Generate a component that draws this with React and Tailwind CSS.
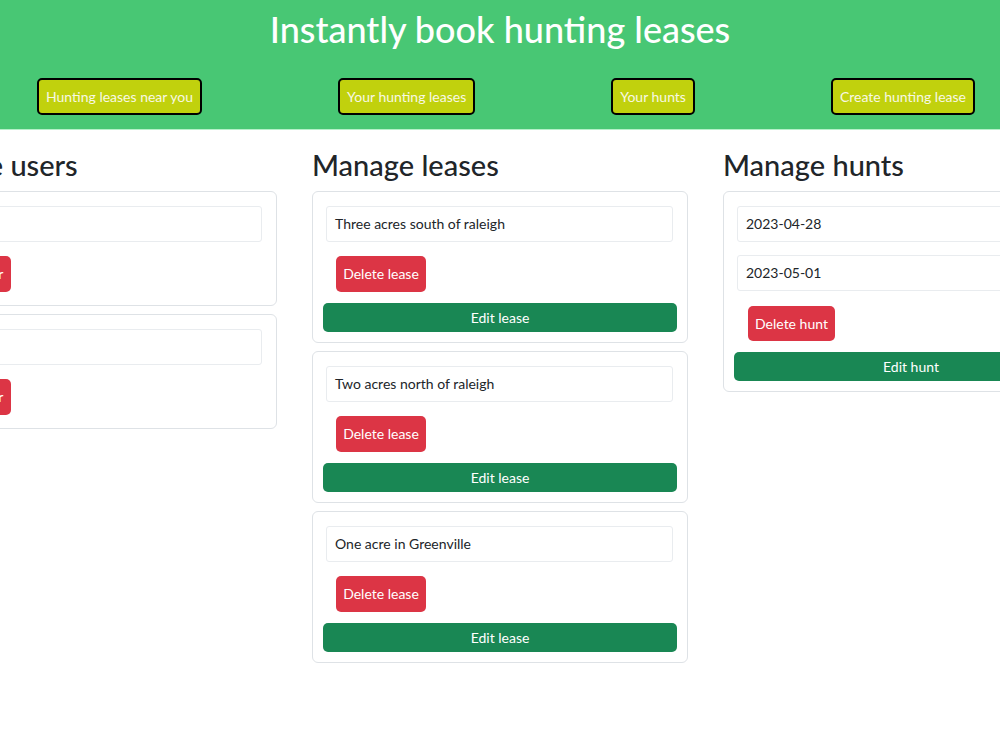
export default function App() {
  const navLinks = ['Hunting leases near you', 'Your hunting leases', 'Your hunts', 'Create hunting lease']

  const users = ['', '']
  const leases = ['Three acres south of raleigh', 'Two acres north of raleigh', 'One acre in Greenville']

  return (
    <div className="w-[1000px] min-h-[750px] bg-white overflow-hidden font-['Lato','Liberation_Sans',sans-serif] text-[#212529]">
      {/* Header */}
      <header className="bg-[#48c774] h-[130px] pt-[8px] border-b border-[#b5f0c9]">
        <h1 className="text-center text-white text-[36px] font-medium leading-[1.2]">Instantly book hunting leases</h1>
        <nav className="flex justify-between pl-[37px] pr-[25px] mt-[27px]">
          {navLinks.map((link) => (
            <button key={link} className="h-[37px] px-[7px] bg-[#c1d10d] border-2 border-black rounded-[5px] text-[14px] text-[#f8f8e4]">
              {link}
            </button>
          ))}
        </nav>
      </header>

      {/* Columns */}
      <main className="flex justify-center gap-[35px] pt-[18px]">
        {/* Left: users */}
        <section className="w-[376px] shrink-0">
          <h2 className="text-[29px] font-medium leading-[1.2] mb-[8px]">Manage users</h2>
          {users.map((u, idx) => (
            <div key={idx} className="border border-[#dee2e6] rounded-[6px] pt-[14px] pb-[13px] px-[10px] mb-[8px]">
              <div className="h-[36px] w-[347px] ml-[3px] border border-[#e9ecef] rounded-[3px] px-[8px] flex items-center text-[14px]">{u}</div>
              <button className="mt-[14px] ml-[13px] h-[36px] w-[86px] bg-[#dc3545] text-white rounded-[5px] text-[14px]">Delete user</button>
            </div>
          ))}
        </section>

        {/* Middle: leases */}
        <section className="w-[376px] shrink-0">
          <h2 className="text-[29px] font-medium leading-[1.2] mb-[8px]">Manage leases</h2>
          {leases.map((lease) => (
            <div key={lease} className="border border-[#dee2e6] rounded-[6px] pt-[14px] pb-[10px] px-[10px] mb-[8px]">
              <div className="h-[36px] w-[347px] ml-[3px] border border-[#e9ecef] rounded-[3px] px-[8px] flex items-center text-[14px]">{lease}</div>
              <button className="block mt-[14px] ml-[13px] h-[36px] w-[90px] bg-[#dc3545] text-white rounded-[5px] text-[14px]">Delete lease</button>
              <button className="block mt-[11px] h-[29px] w-full bg-[#198754] text-white rounded-[5px] text-[14px]">Edit lease</button>
            </div>
          ))}
        </section>

        {/* Right: hunts */}
        <section className="w-[376px] shrink-0">
          <h2 className="text-[29px] font-medium leading-[1.2] mb-[8px]">Manage hunts</h2>
          <div className="border border-[#dee2e6] rounded-[6px] pt-[14px] pb-[10px] px-[10px]">
            <div className="h-[36px] w-[347px] ml-[3px] border border-[#e9ecef] rounded-[3px] px-[8px] flex items-center text-[14px]">2023-04-28</div>
            <div className="mt-[13px] h-[36px] w-[347px] ml-[3px] border border-[#e9ecef] rounded-[3px] px-[8px] flex items-center text-[14px]">2023-05-01</div>
            <button className="block mt-[15px] ml-[14px] h-[35px] w-[87px] bg-[#dc3545] text-white rounded-[5px] text-[14px]">Delete hunt</button>
            <button className="block mt-[11px] h-[29px] w-full bg-[#198754] text-white rounded-[5px] text-[14px]">Edit hunt</button>
          </div>
        </section>
      </main>
    </div>
  )
}
